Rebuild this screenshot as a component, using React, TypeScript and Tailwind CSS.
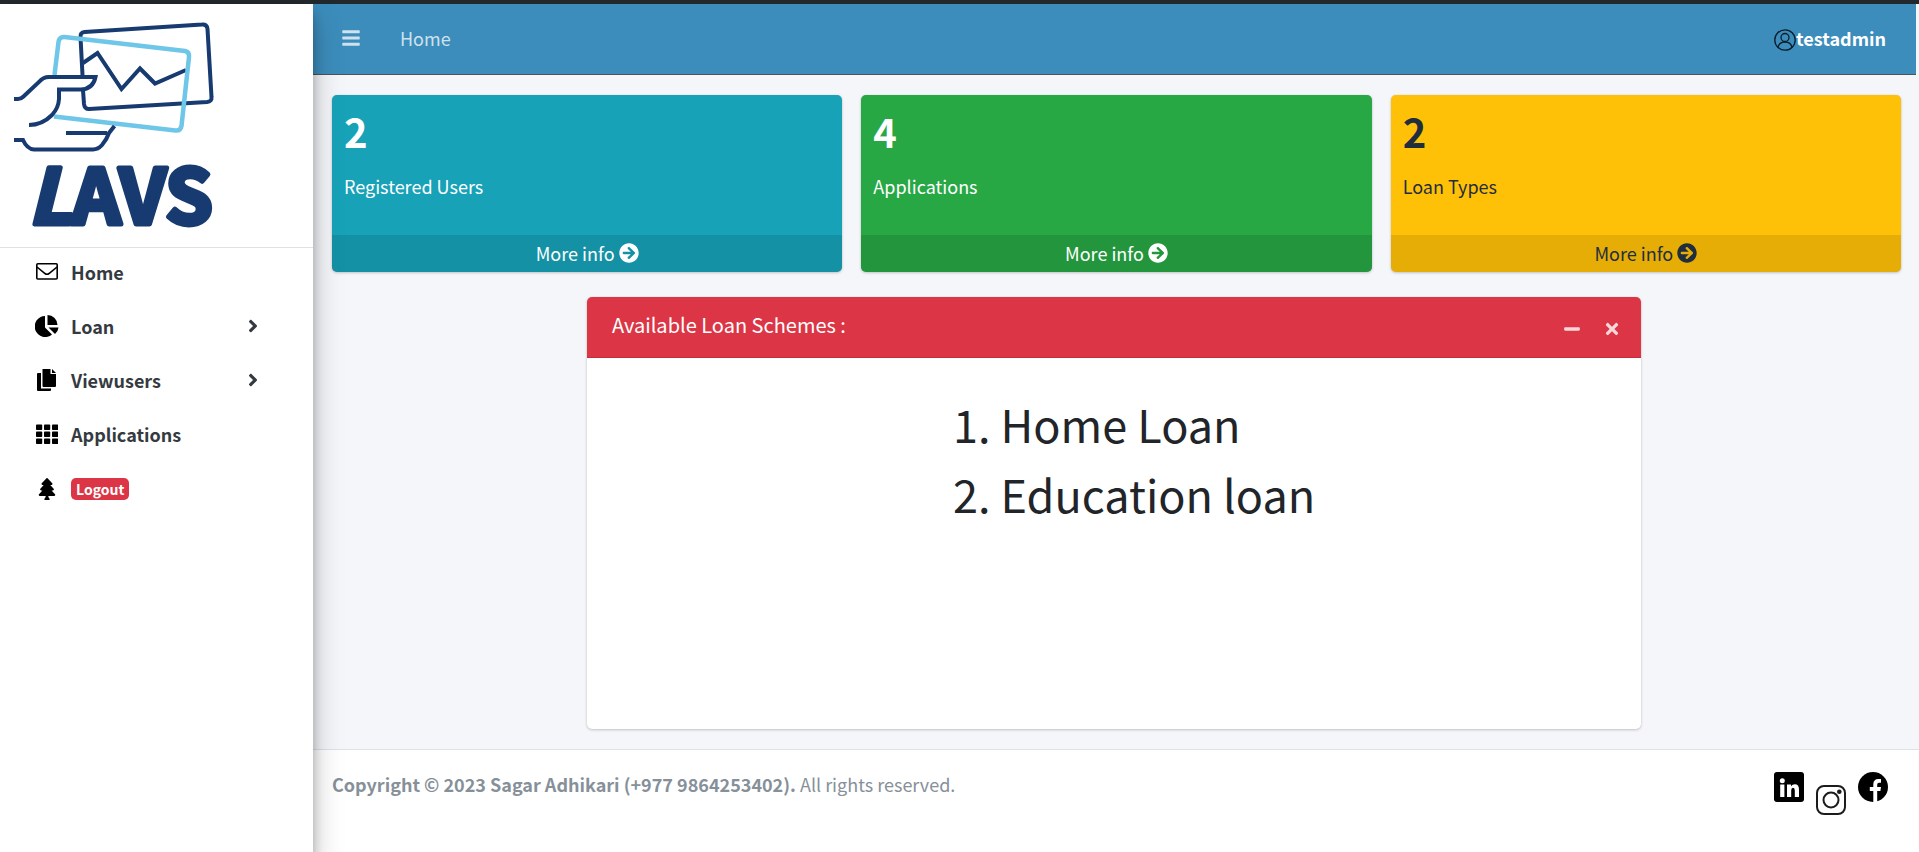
import React from "react";
import { FaBars, FaArrowCircleRight, FaMinus, FaTimes, FaAngleRight, FaTree } from "react-icons/fa";

const navy = "#173a70";
const sky = "#6ec6e8";

function Logo() {
  return (
    <svg viewBox="0 18 220 216" className="block h-[216px] w-[220px] overflow-visible" role="img" aria-label="LAVS">
      <g fill="none" strokeLinejoin="miter">
        <g stroke={navy} strokeWidth="4">
          <path d="M82.500 75 L80.500 37 Q80 32.500 84.500 32 L202 24.500 Q207 24 207.500 29 L211.500 97 Q212 101.500 207 102 L89 109 Q84.500 109 84 104 L83 90" />
          <path d="M83 63 L97.500 53 L121.500 89 L140 68.500 L155 83.500 L186 70" />
        </g>
        <path
          d="M54.500 75 L58.500 42 Q59.500 36.500 64.500 37 L185 51 Q189.500 52 189 57 L181.500 126 Q180.500 131 175.500 130.500 L54 116.500"
          stroke={sky}
          strokeWidth="4.500"
        />
        <g stroke={navy} strokeWidth="4">
          <path d="M14 99 H18 Q21 99 23.500 96.500 L39 82 Q43 77 49 77 H95.500 Q93 89 81 89.500 H59 V99 Q58.500 108 52 115 Q42 125 29 125" />
          <path d="M66 133 H107" />
          <path d="M14 140 H23 Q27 149 34 149.500 H93 Q98 149.500 102 145 Q107 139 109 133 L114.500 126" />
        </g>
      </g>
      <text
        x="28"
        y="224"
        fill={navy}
        stroke={navy}
        strokeWidth="5"
        strokeLinejoin="round"
        className="font-['Noto_Sans_CJK_SC',sans-serif] text-[76px] font-bold"
      >
        <tspan className="italic">L</tspan>AVS
      </text>
    </svg>
  );
}

function MailIcon() {
  return (
    <svg viewBox="0 0 22 22" className="size-[22px]" fill="none" stroke="#000" strokeWidth="1.600">
      <rect x="0.800" y="2.800" width="20.400" height="15.200" rx="1" />
      <path d="M1 6 L9 12.500 Q11 14 13 12.500 L21 6" />
    </svg>
  );
}

function PieIcon() {
  return (
    <svg viewBox="0 0 24 22" className="h-[22px] w-[24px]">
      <path d="M10 1 A10.500 10.500 0 1 0 17 19.500 L10 12.500 Z" />
      <path d="M12.500 0 V10 H22.500 A10 10 0 0 0 12.500 0 Z" />
      <path d="M13.500 12.500 H23.500 A10 10 0 0 1 20 19 Z" />
    </svg>
  );
}

function FilesIcon() {
  return (
    <svg viewBox="0 0 22 22" className="size-[22px]">
      <path d="M6.500 0 H14.500 V5 H20 V17 Q20 18 19 18 H7.500 Q6.500 18 6.500 17 Z" />
      <path d="M16 0 L20 4 H16 Z" />
      <path d="M1 5 Q1 4 2 4 H5 V19.500 H15 V21 Q15 22 14 22 H2 Q1 22 1 21 Z" />
    </svg>
  );
}

function GridIcon() {
  return (
    <svg viewBox="0 0 22 22" className="size-[22px]">
      {[1.5, 8.5, 15.5].map((y) =>
        [0, 8, 16].map((x) => <rect key={`${x}-${y}`} x={x} y={y} width="6.200" height="5.500" rx="0.800" />),
      )}
    </svg>
  );
}

function UserIcon() {
  return (
    <svg viewBox="0 0 22 22" className="mt-1 size-[22px]" fill="none" stroke="#0b1d2a" strokeWidth="1.300">
      <circle cx="11" cy="11" r="10.200" />
      <circle cx="11" cy="8.500" r="4" />
      <path d="M4 18.500 Q5 13 11 13 Q17 13 18 18.500" />
    </svg>
  );
}

const menu = [
  { label: "Home", icon: <MailIcon />, expandable: false },
  { label: "Loan", icon: <PieIcon />, expandable: true },
  { label: "Viewusers", icon: <FilesIcon />, expandable: true },
  { label: "Applications", icon: <GridIcon />, expandable: false },
];

const stats = [
  { value: 2, label: "Registered Users", tone: "bg-[#17a2b8] text-white" },
  { value: 4, label: "Applications", tone: "bg-[#28a745] text-white" },
  { value: 2, label: "Loan Types", tone: "bg-[#ffc107] text-[#1f2d3d]" },
];

const schemes = ["Home Loan", "Education loan"];

function Sidebar() {
  return (
    <aside className="z-10 w-[313px] shrink-0 bg-white shadow-[0_14px_28px_rgba(0,0,0,0.25),0_10px_10px_rgba(0,0,0,0.22)]">
      <a href="#" className="block border-b border-[#dee2e6] pt-[14px] pb-[13px]">
        <Logo />
      </a>
      <nav className="text-[18px] leading-[30px] font-bold text-[#343a40]">
        <ul>
          {menu.map((item) => (
            <li key={item.label}>
              <a href="#" className="flex h-[54px] items-center pr-[50px] pb-[6px] pl-[34px]">
                <span className="mr-[11px] flex w-[26px] justify-center">{item.icon}</span>
                <span className="flex-1">{item.label}</span>
                {item.expandable && <FaAngleRight className="size-5" />}
              </a>
            </li>
          ))}
          <li>
            <a href="#" className="flex h-[54px] items-center pb-[4px] pl-[34px]">
              <span className="mr-[11px] flex w-[26px] justify-center text-black">
                <FaTree className="size-[22px]" />
              </span>
              <span className="rounded-[5px] bg-[#dc3545] px-[5px] text-[14px] leading-[22px] text-white">Logout</span>
            </a>
          </li>
        </ul>
      </nav>
    </aside>
  );
}

function Navbar() {
  return (
    <header className="mr-[3px] flex h-[71px] items-center border-b border-[#4b545c] bg-[#3c8dbc] pr-[30px] pb-[2px] pl-[28px] text-white/75">
      <button type="button" aria-label="Toggle menu">
        <FaBars className="size-5" />
      </button>
      <a href="#" className="ml-[39px] leading-[30px]">
        Home
      </a>
      <a href="#" className="ml-auto flex items-center font-bold text-white">
        <UserIcon />
        <span className="leading-[30px]">testadmin</span>
      </a>
    </header>
  );
}

export default function App() {
  return (
    <div className="flex min-h-screen flex-col border-t-4 border-[#22292c] bg-[#f4f6f9] font-['Source_Sans_Pro','Noto_Sans_CJK_SC',sans-serif] text-[18px] leading-[30px] text-[#212529]">
      <div className="flex flex-1">
        <Sidebar />
        <div className="flex min-w-0 flex-1 flex-col">
          <Navbar />
          <main className="flex-1 pt-5 pr-[18px] pb-5 pl-[19px]">
            <div className="grid grid-cols-3 gap-[19px]">
              {stats.map((s) => (
                <section key={s.label} className={`overflow-hidden rounded-[5px] shadow-[0_1px_3px_rgba(0,0,0,0.2),0_0_1px_rgba(0,0,0,0.125)] ${s.tone}`}>
                  <div className="h-[140px] p-3">
                    <h3 className="text-[40px] leading-[48px] font-bold">{s.value}</h3>
                    <p className="mt-4">{s.label}</p>
                  </div>
                  <a href="#" className="flex h-[37px] items-center justify-center gap-1 bg-black/10 pb-[2px]">
                    More info <FaArrowCircleRight className="size-5" />
                  </a>
                </section>
              ))}
            </div>
            <section className="mt-[25px] ml-[16.25%] min-h-[432px] w-[67.2%] overflow-hidden rounded-[5px] bg-white shadow-[0_1px_3px_rgba(0,0,0,0.2),0_0_1px_rgba(0,0,0,0.125)]">
              <header className="flex h-[61px] items-start border-b border-black/10 bg-[#dc3545] pt-[13px] pr-5 pl-[25px] text-white">
                <h3 className="text-[20px]">Available Loan Schemes :</h3>
                <div className="ml-auto flex h-[38px] items-center gap-[22px] text-white/80">
                  <button type="button" aria-label="Collapse">
                    <FaMinus className="size-[18px]" />
                  </button>
                  <button type="button" aria-label="Close">
                    <FaTimes className="size-[18px]" />
                  </button>
                </div>
              </header>
              <ol className="mx-auto mt-9 w-fit pl-10 text-[45px] leading-[60px]">
                {schemes.map((name, i) => (
                  <li key={name} className="mb-[10px] flex gap-[10px]">
                    <span>{i + 1}.</span>
                    <span>{name}</span>
                  </li>
                ))}
              </ol>
            </section>
          </main>
          <footer className="flex h-[107px] items-start border-t border-[#dee2e6] bg-white pt-[19px] pr-[31px] pl-[19px] text-[#869099]">
            <p>
              <strong className="font-bold">Copyright © 2023 Sagar Adhikari (+977 9864253402).</strong> All rights reserved.
            </p>
            <div className="ml-auto flex gap-3 pt-[3px]">
              <a href="#" aria-label="LinkedIn">
                <svg viewBox="0 0 30 30" className="size-[30px]">
                  <rect width="30" height="30" rx="3" fill="#000" />
                  <g fill="#fff">
                    <circle cx="8.300" cy="8.700" r="2.500" />
                    <rect x="6.200" y="12.500" width="4.200" height="12.500" />
                    <path d="M13 12.500 H17 V14.300 Q18.400 12.200 20.800 12.200 Q25 12.200 25 17.500 V25 H20.800 V18.500 Q20.800 15.800 19 15.800 Q17.200 15.800 17.200 18.500 V25 H13 Z" />
                  </g>
                </svg>
              </a>
              <a href="#" aria-label="Instagram" className="mt-[13px]">
                <svg viewBox="0 0 30 30" className="size-[30px]" fill="none" stroke="#1c1c1c">
                  <rect x="1" y="1" width="28" height="28" rx="7" strokeWidth="2" />
                  <circle cx="15" cy="15" r="7.500" strokeWidth="2" />
                  <circle cx="23.300" cy="6.700" r="2.300" fill="#1c1c1c" stroke="none" />
                </svg>
              </a>
              <a href="#" aria-label="Facebook">
                <svg viewBox="0 0 30 30" className="size-[30px]">
                  <circle cx="15" cy="15" r="15" fill="#000" />
                  <path
                    fill="#fff"
                    d="M15.300 30 V19 H11.800 V15 H15.300 V12.500 Q15.300 7 20.500 7 H23 V10.700 H21 Q19.200 10.700 19.200 12.800 V15 H23 L22.400 19 H19.200 V30 Z"
                  />
                </svg>
              </a>
            </div>
          </footer>
        </div>
      </div>
    </div>
  );
}
